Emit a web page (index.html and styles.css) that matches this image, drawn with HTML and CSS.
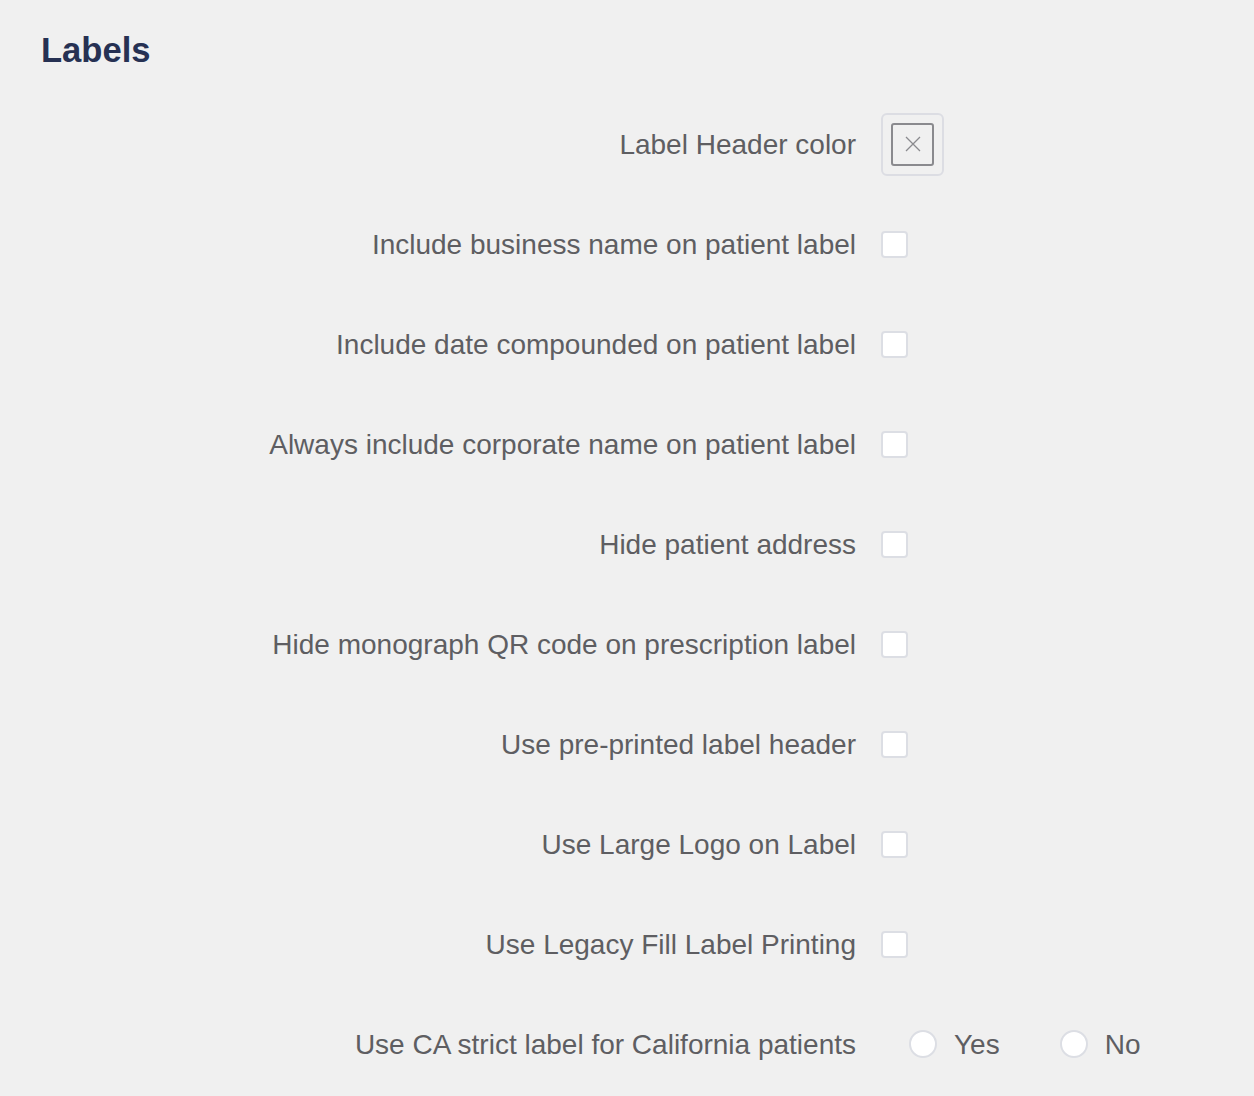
FILE: index.html
```html
<!DOCTYPE html>
<html>
<head>
<meta charset="utf-8">
<link rel="stylesheet" href="styles.css">
</head>
<body>
<div class="page">
  <h1 class="title">Labels</h1>
  <div class="form">
    <div class="label">Label Header color</div>
    <div class="control">
      <div class="swatch"><div class="swatch-inner"><svg width="18" height="18" viewBox="0 0 18 18"><path d="M2 2L16 16M16 2L2 16" stroke="#8a8a8e" stroke-width="1.3" fill="none"/></svg></div></div>
    </div>

    <div class="label">Include business name on patient label</div>
    <div class="control"><span class="check"></span></div>

    <div class="label">Include date compounded on patient label</div>
    <div class="control"><span class="check"></span></div>

    <div class="label">Always include corporate name on patient label</div>
    <div class="control"><span class="check"></span></div>

    <div class="label">Hide patient address</div>
    <div class="control"><span class="check"></span></div>

    <div class="label">Hide monograph QR code on prescription label</div>
    <div class="control"><span class="check"></span></div>

    <div class="label">Use pre-printed label header</div>
    <div class="control"><span class="check"></span></div>

    <div class="label">Use Large Logo on Label</div>
    <div class="control"><span class="check"></span></div>

    <div class="label">Use Legacy Fill Label Printing</div>
    <div class="control"><span class="check"></span></div>

    <div class="label">Use CA strict label for California patients</div>
    <div class="control radios">
      <span class="radio-opt"><span class="radio"></span><span class="radio-text">Yes</span></span>
      <span class="radio-opt"><span class="radio"></span><span class="radio-text">No</span></span>
    </div>
  </div>
</div>
</body>
</html>
```
FILE: styles.css
```css
html, body {
  margin: 0;
  padding: 0;
  background: #f0f0f0;
}
body {
  font-family: "Liberation Sans", Arial, sans-serif;
  width: 1254px;
  height: 1096px;
  overflow: hidden;
}
.page {
  padding-top: 30px;
}
.title {
  margin: 0 0 24px 41px;
  font-size: 34.6px;
  line-height: 40px;
  font-weight: bold;
  color: #263153;
}
.form {
  display: grid;
  grid-template-columns: 856px auto;
  grid-auto-rows: 100px;
  column-gap: 25px;
  align-items: center;
}
.label {
  text-align: right;
  font-size: 28px;
  padding-top: 2px;
  color: #5e5e62;
  white-space: nowrap;
}
.control {
  display: flex;
  align-items: center;
}
.swatch {
  box-sizing: border-box;
  width: 63px;
  height: 63px;
  border: 2px solid #dcdde3;
  border-radius: 6px;
  display: flex;
  align-items: center;
  justify-content: center;
}
.swatch-inner {
  box-sizing: border-box;
  width: 43px;
  height: 43px;
  border: 2px solid #8a8a8e;
  border-radius: 3px;
  display: flex;
  align-items: center;
  justify-content: center;
}
.check {
  box-sizing: border-box;
  width: 27px;
  height: 27px;
  background: #fff;
  border: 2px solid #dcdee4;
  border-radius: 4px;
}
.radios {
  padding-left: 28px;
  gap: 60px;
}
.radio-opt {
  display: flex;
  align-items: center;
  gap: 17px;
}
.radio {
  box-sizing: border-box;
  width: 28px;
  height: 28px;
  border-radius: 50%;
  background: #fff;
  border: 2px solid #dcdee4;
}
.radio-text {
  font-size: 28px;
  padding-top: 2px;
  color: #5e5e62;
}
```
